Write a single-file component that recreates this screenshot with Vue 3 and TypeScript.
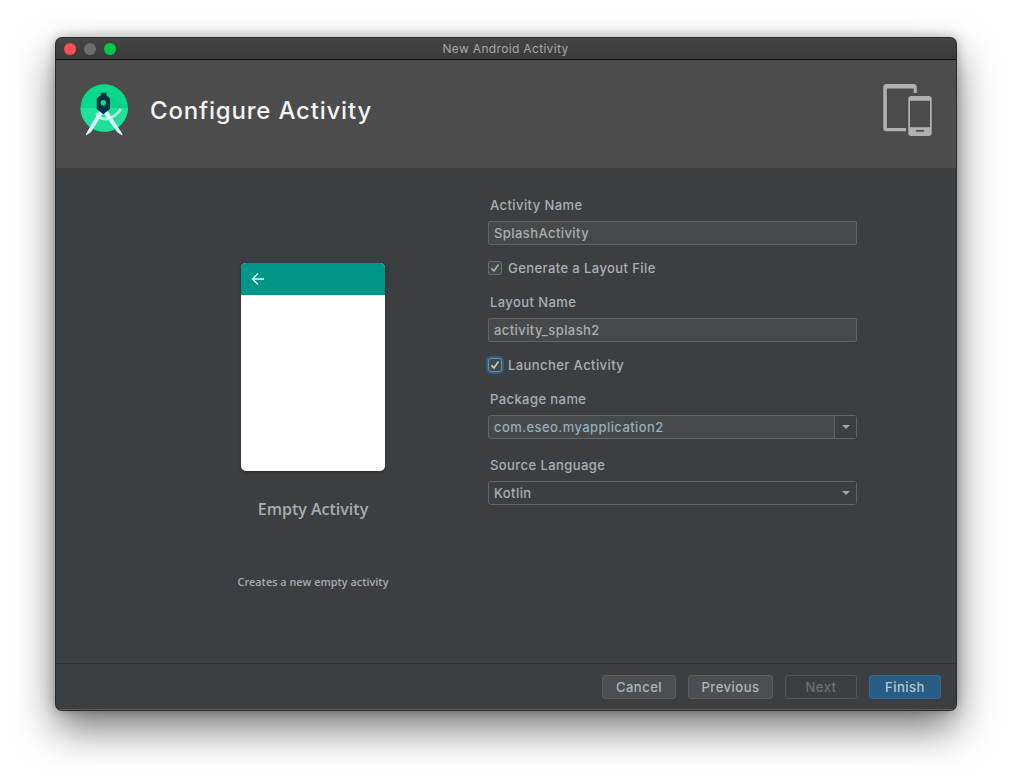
<script setup lang="ts">
const buttons: { label: string; kind: string; width: number }[] = [
  { label: 'Cancel', kind: 'normal', width: 74 },
  { label: 'Previous', kind: 'normal', width: 85 },
  { label: 'Next', kind: 'disabled', width: 72 },
  { label: 'Finish', kind: 'primary', width: 72 },
]
</script>

<template>
  <div class="stage">
    <div class="window">
      <div class="titlebar">
        <div class="lights">
          <span class="light red"></span>
          <span class="light grey"></span>
          <span class="light green"></span>
        </div>
        <span class="wintitle">New Android Activity</span>
      </div>
      <header class="header">
        <div class="brand">
          <svg class="logo" width="56" height="56" viewBox="0 0 56 56">
            <circle cx="28.200" cy="24" r="23.700" fill="#08d98a" />
            <path d="M4.500 24a23.700 23.700 0 0 0 47.400 0z" fill="#1ee29b" />
            <path d="M34 12 L51.900 24 L34 24z" fill="#0ac983" opacity=".55" />
            <path d="M20.500 29 Q23 35 29.500 35 Q38.500 34.500 44.800 25" fill="none" stroke="#b9eedd" stroke-width="2.800" />
            <path d="M23.800 26 L10 49.800 L10 51.500 L15.200 48 L27 29z" fill="#d6f0fa" />
            <path d="M31 26 L27.500 29 L41 48 L46.200 51.500 L46.300 49.800z" fill="#d6f0fa" />
            <path d="M24.700 8.700 h6 v3.300 h0.600 l2.700 2.600 v10.400 L27.300 30.300 L20.700 25 v-10.400 l2.700 -2.600 h1.300z" fill="#073042" />
            <circle cx="27.300" cy="18.700" r="2.800" fill="#0bd88b" />
          </svg>
          <h1 class="pagetitle">Configure Activity</h1>
        </div>
        <svg class="devices" width="50" height="52" viewBox="0 0 50 52">
          <path d="M4.300 0h27.400a3 3 0 0 1 3 3v6h-3V4.500H4.800v39.500H24v3.300H4.300a3 3 0 0 1-3-3V3a3 3 0 0 1 3-3z" fill="#afb1b3" />
          <path fill-rule="evenodd" d="M29.300 12h17.400a3 3 0 0 1 3 3v34a3 3 0 0 1-3 3H29.300a3 3 0 0 1-3-3V15a3 3 0 0 1 3-3zM28 16.700v26.600h20V16.700zM34 46v1.700h8V46z" fill="#afb1b3" />
        </svg>
      </header>
      <main class="body">
        <section class="preview">
          <div class="card">
            <div class="cardbar">
              <svg width="14" height="14" viewBox="0 0 14 14">
                <path d="M13 7H1.800M7 1.500L1.500 7L7 12.500" fill="none" stroke="#e6f5f3" stroke-width="1.300" />
              </svg>
            </div>
          </div>
          <div class="cardname">Empty Activity</div>
          <div class="carddesc">Creates a new empty activity</div>
        </section>
        <section class="form">
          <label class="label first">Activity Name</label>
          <div class="input">SplashActivity</div>
          <div class="check">
            <span class="box">
              <svg width="14" height="14" viewBox="0 0 14 14"><path d="M3.500 7.300L6 10L10.500 3.500" fill="none" stroke="#a9abad" stroke-width="1.700" /></svg>
            </span>
            <span>Generate a Layout File</span>
          </div>
          <label class="label">Layout Name</label>
          <div class="input">activity_splash2</div>
          <div class="check">
            <span class="box focused">
              <svg width="14" height="14" viewBox="0 0 14 14"><path d="M3.500 7.300L6 10L10.500 3.500" fill="none" stroke="#c6c8ca" stroke-width="1.700" /></svg>
            </span>
            <span>Launcher Activity</span>
          </div>
          <label class="label">Package name</label>
          <div class="input combo">
            <span class="pkg">com.eseo.myapplication2</span>
            <span class="arrowbox"><i class="arrow"></i></span>
          </div>
          <label class="label last">Source Language</label>
          <div class="input select">
            <span>Kotlin</span>
            <span class="arrowbox plain"><i class="arrow"></i></span>
          </div>
        </section>
      </main>
      <footer class="footer">
        <button
          v-for="b in buttons"
          :key="b.label"
          class="btn"
          :class="b.kind"
          :style="{ width: b.width + 'px' }"
        >{{ b.label }}</button>
      </footer>
    </div>
  </div>
</template>

<style>
html, body { margin: 0; background: #fff; }
</style>

<style scoped>
.stage {
  width: 1012px;
  height: 784px;
  box-sizing: border-box;
  padding: 38px 56px;
  overflow: hidden;
  background: #fff;
  font-family: Inter, "Liberation Sans", Arial, sans-serif;
}
.window {
  width: 900px;
  height: 672px;
  box-sizing: border-box;
  display: flex;
  flex-direction: column;
  border-radius: 6px;
  overflow: hidden;
  background: #3c3f41;
  box-shadow: 0 0 0 1px #2a2a2a, 0 18px 40px rgba(0, 0, 0, .55), 0 0 12px rgba(0, 0, 0, .3);
}
.titlebar {
  height: 21px;
  flex: none;
  position: relative;
  display: flex;
  align-items: center;
  justify-content: center;
  background: linear-gradient(#454545, #393b3b);
  border-bottom: 1px solid #0e0e0e;
}
.lights {
  position: absolute;
  left: 8px;
  top: 5px;
  display: flex;
  gap: 8px;
}
.light { width: 12px; height: 12px; border-radius: 50%; }
.red { background: #fc4e53; }
.grey { background: #6d6e6e; }
.green { background: #06c844; }
.wintitle { font-size: 12px; letter-spacing: .33px; color: #a8a8a8; margin-right: 1px; }
.header {
  height: 108px;
  flex: none;
  box-sizing: border-box;
  padding: 24px 24px 0 20px;
  display: flex;
  justify-content: space-between;
  align-items: flex-start;
  background: #4c4c4c;
}
.brand { display: flex; align-items: flex-start; }
.logo { display: block; }
.pagetitle {
  margin: 12px 0 0 18px;
  font-size: 24px;
  line-height: 30px;
  font-weight: 500;
  letter-spacing: .8px;
  color: #f2f2f2;
}
.devices { display: block; }
.body {
  flex: 1;
  min-height: 0;
  display: flex;
  background: #3c3f41;
}
.preview {
  width: 432px;
  box-sizing: border-box;
  padding: 95px 0 0 82px;
  display: flex;
  flex-direction: column;
  align-items: center;
}
.card {
  width: 144px;
  height: 208px;
  flex: none;
  border-radius: 5px;
  overflow: hidden;
  background: #fff;
  box-shadow: 0 1px 3px rgba(0, 0, 0, .35);
}
.cardbar {
  height: 32px;
  display: flex;
  align-items: center;
  padding-left: 10px;
  background: #009688;
}
.cardname {
  margin-top: 28px;
  font-family: "Open Sans", sans-serif;
  font-size: 16px;
  line-height: 20px;
  font-weight: 600;
  color: #a9abad;
}
.carddesc {
  margin-top: 53px;
  font-family: "Open Sans", sans-serif;
  font-size: 10.800px;
  line-height: 20px;
  font-weight: 600;
  letter-spacing: .03px;
  color: #a9abad;
}
.form {
  width: 369px;
  display: flex;
  flex-direction: column;
  padding-top: 29px;
}
.label {
  height: 16px;
  margin: 17px 0 8px 2px;
  font-size: 13px;
  font-weight: 500;
  line-height: 16px;
  letter-spacing: .42px;
  color: #acaeb0;
}
.label.first { margin-top: 0; }
.label.last { margin-top: 18px; }
.input {
  height: 24px;
  box-sizing: border-box;
  padding-left: 5px;
  display: flex;
  align-items: center;
  justify-content: space-between;
  border: 1px solid #646464;
  border-radius: 2px;
  background: #45494a;
  font-size: 13px;
  font-weight: 500;
  letter-spacing: .42px;
  color: #acaeb0;
}
.select { background: #3c3f41; border-radius: 3px; padding-right: 0; }
.combo { border-radius: 3px; }
.pkg { color: #95adbd; }
.arrowbox {
  width: 21px;
  height: 100%;
  display: flex;
  align-items: center;
  justify-content: center;
  border-left: 1px solid #646464;
  background: #3c3f41;
}
.arrowbox.plain { border-left: 0; }
.arrow {
  width: 0;
  height: 0;
  border-left: 4.500px solid transparent;
  border-right: 4.500px solid transparent;
  border-top: 4.500px solid #a3a5a7;
}
.check {
  height: 16px;
  margin-top: 15px;
  margin-bottom: 1px;
  display: flex;
  align-items: center;
  gap: 6px;
  font-size: 13px;
  font-weight: 500;
  letter-spacing: .42px;
  color: #acaeb0;
}
.box {
  width: 14px;
  height: 14px;
  box-sizing: border-box;
  display: flex;
  align-items: center;
  justify-content: center;
  border: 1px solid #6b6b6b;
  border-radius: 2px;
  background: #43494a;
}
.box svg { flex: none; }
.box.focused {
  border-color: #6a8da5;
  border-radius: 3px;
  box-shadow: 0 0 0 2px #2d5e83;
}
.footer {
  height: 47px;
  flex: none;
  box-sizing: border-box;
  border-top: 1px solid #323232;
  border-bottom: 1px solid #5c5e60;
  padding: 11px 15px 0 0;
  display: flex;
  justify-content: flex-end;
  gap: 12px;
  background: #3c3f41;
}
.btn {
  height: 24px;
  padding: 0;
  border: 1px solid #5a5e5f;
  border-radius: 3px;
  background: #4b4f51;
  color: #b4b6b8;
  font-family: Inter, "Liberation Sans", Arial, sans-serif;
  font-size: 13px;
  font-weight: 500;
  letter-spacing: .5px;
}
.btn.disabled { background: #3c3f41; color: #6c6f71; border-color: #535657; }
.btn.primary { background: #275d84; color: #bfc5ca; border-color: #38688c; }
</style>
